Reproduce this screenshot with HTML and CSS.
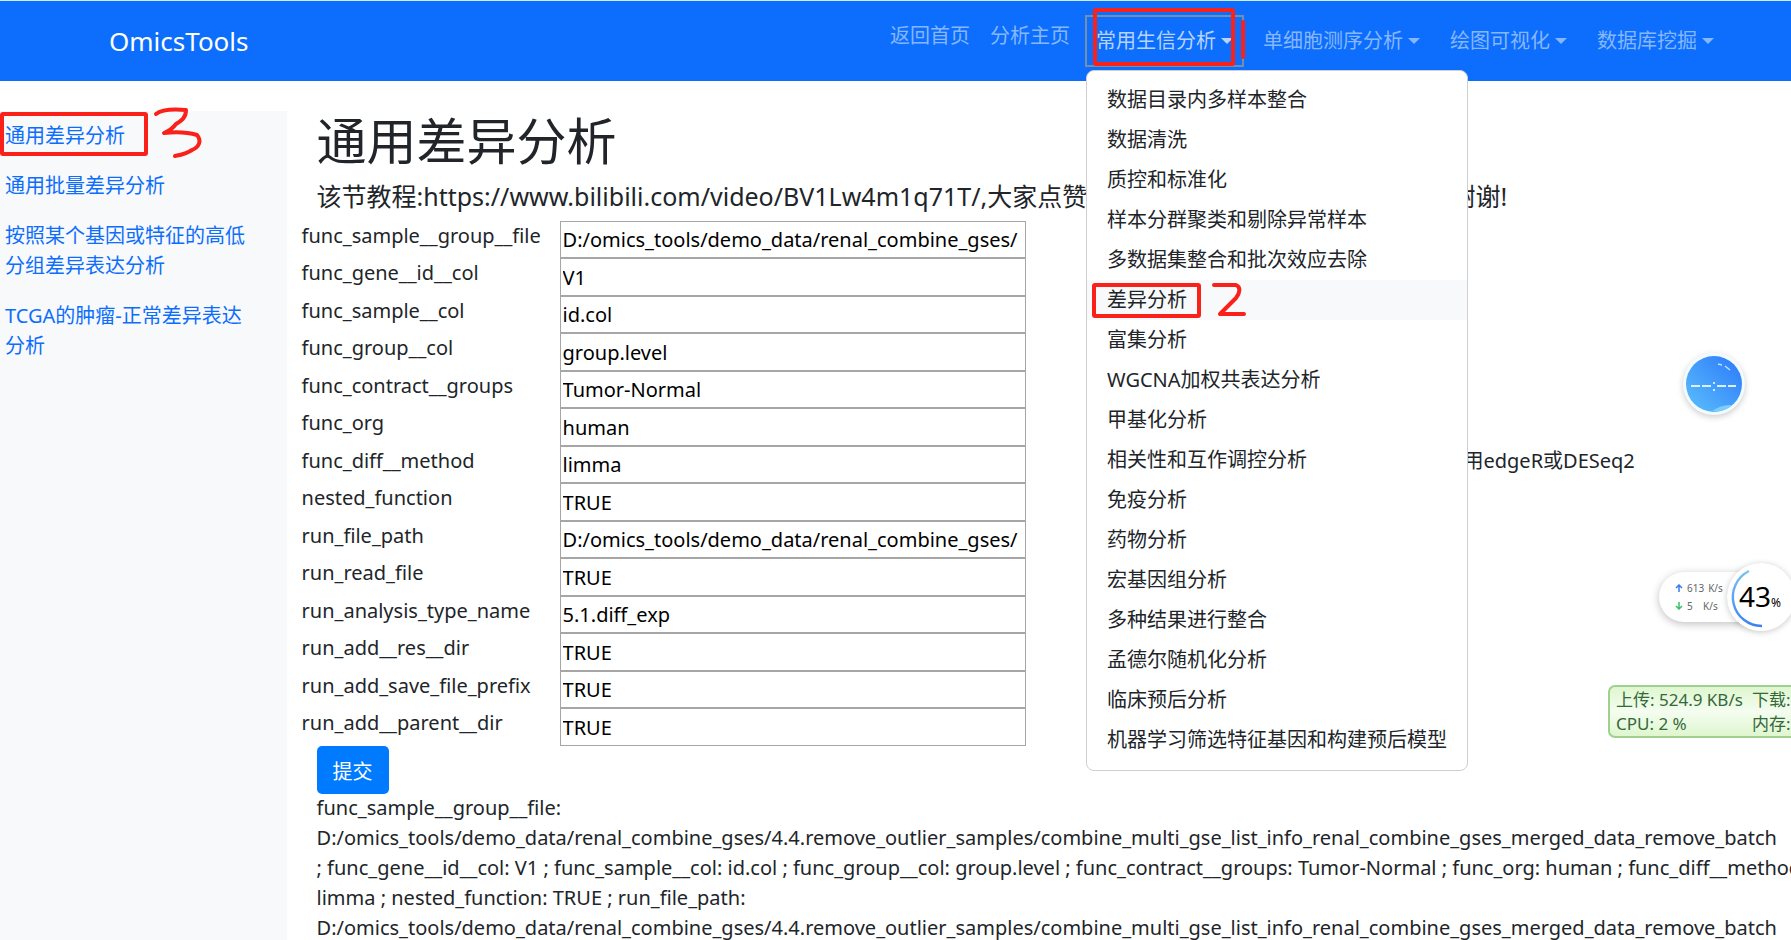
FILE: index.html
```html
<!DOCTYPE html>
<html lang="zh-CN">
<head>
  <meta charset="UTF-8" />
  <meta name="viewport" content="width=device-width, initial-scale=1.0" />
  <title>OmicsTools</title>
  <link rel="stylesheet" href="styles.css">
</head>
<body>
  <nav class="navbar">
    <a class="brand" href="#">OmicsTools</a>
    <ul class="nav-list">
      <li><a class="nav-link" href="#">返回首页</a></li>
      <li><a class="nav-link" href="#">分析主页</a></li>
      <li class="dropdown">
        <button type="button" class="nav-toggle active" aria-expanded="true">常用生信分析</button>
        <svg class="mark mark-nav" width="160" height="62" viewBox="0 0 160 62" aria-hidden="true">
          <rect x="3" y="3" width="138" height="54" rx="1" />
          <path d="M151 15V50" />
        </svg>
        <ul class="menu">
          <li><a href="#">数据目录内多样本整合</a></li>
          <li><a href="#">数据清洗</a></li>
          <li><a href="#">质控和标准化</a></li>
          <li><a href="#">样本分群聚类和剔除异常样本</a></li>
          <li><a href="#">多数据集整合和批次效应去除</a></li>
          <li class="current">
            <a href="#">差异分析</a>
            <svg class="mark mark-menu" width="160" height="40" viewBox="0 0 160 40" aria-hidden="true">
              <rect x="7" y="5" width="105" height="31" rx="1" />
              <path d="M127 5L149 5C154 7 153 13 149 18L133 34L157 34" />
            </svg>
          </li>
          <li><a href="#">富集分析</a></li>
          <li><a href="#">WGCNA加权共表达分析</a></li>
          <li><a href="#">甲基化分析</a></li>
          <li><a href="#">相关性和互作调控分析</a></li>
          <li><a href="#">免疫分析</a></li>
          <li><a href="#">药物分析</a></li>
          <li><a href="#">宏基因组分析</a></li>
          <li><a href="#">多种结果进行整合</a></li>
          <li><a href="#">孟德尔随机化分析</a></li>
          <li><a href="#">临床预后分析</a></li>
          <li><a href="#">机器学习筛选特征基因和构建预后模型</a></li>
        </ul>
      </li>
      <li class="dropdown"><button type="button" class="nav-toggle">单细胞测序分析</button></li>
      <li class="dropdown"><button type="button" class="nav-toggle">绘图可视化</button></li>
      <li class="dropdown"><button type="button" class="nav-toggle">数据库挖掘</button></li>
    </ul>
  </nav>

  <div class="page">
    <aside class="sidebar">
      <a href="#">通用差异分析</a>
      <a href="#">通用批量差异分析</a>
      <a href="#">按照某个基因或特征的高低分组差异表达分析</a>
      <a href="#">TCGA的肿瘤-正常差异表达分析</a>
      <svg class="mark mark-side" width="206" height="60" viewBox="0 0 206 60" aria-hidden="true">
        <rect x="2" y="10" width="144" height="40" rx="1" />
        <path d="M156 10C162 5 174 5 186 6C186 14 181 17 176 20C173 24 169 27 164 29C174 28 187 28 197 31C202 37 199 43 192 46C186 50 180 51 175 52" />
      </svg>
    </aside>

    <main class="content">
      <h1>通用差异分析</h1>
      <p class="lead">该节教程:https://www.bilibili.com/video/BV1Lw4m1q71T/,大家点赞投币收藏关注,支持一下我们频道,谢谢!</p>

      <form class="params">
        <label for="p1">func_sample__group__file</label>
        <input id="p1" type="text" value="D:/omics_tools/demo_data/renal_combine_gses/">
        <label for="p2">func_gene__id__col</label>
        <input id="p2" type="text" value="V1">
        <label for="p3">func_sample__col</label>
        <input id="p3" type="text" value="id.col">
        <label for="p4">func_group__col</label>
        <input id="p4" type="text" value="group.level">
        <label for="p5">func_contract__groups</label>
        <input id="p5" type="text" value="Tumor-Normal">
        <label for="p6">func_org</label>
        <input id="p6" type="text" value="human">
        <label for="p7">func_diff__method</label>
        <input id="p7" type="text" value="limma">
        <span class="hint">芯片数据使用limma,测序count数据推荐使用edgeR或DESeq2</span>
        <label for="p8">nested_function</label>
        <input id="p8" type="text" value="TRUE">
        <label for="p9">run_file_path</label>
        <input id="p9" type="text" value="D:/omics_tools/demo_data/renal_combine_gses/">
        <label for="p10">run_read_file</label>
        <input id="p10" type="text" value="TRUE">
        <label for="p11">run_analysis_type_name</label>
        <input id="p11" type="text" value="5.1.diff_exp">
        <label for="p12">run_add__res__dir</label>
        <input id="p12" type="text" value="TRUE">
        <label for="p13">run_add_save_file_prefix</label>
        <input id="p13" type="text" value="TRUE">
        <label for="p14">run_add__parent__dir</label>
        <input id="p14" type="text" value="TRUE">
        <button type="submit" class="submit">提交</button>
      </form>

      <div class="output">func_sample__group__file:<br>
        D:/omics_tools/demo_data/renal_combine_gses/4.4.remove_outlier_samples/combine_multi_gse_list_info_renal_combine_gses_merged_data_remove_batch<br>
        ; func_gene__id__col: V1 ; func_sample__col: id.col ; func_group__col: group.level ; func_contract__groups: Tumor-Normal ; func_org: human ; func_diff__method:<br>
        limma ; nested_function: TRUE ; run_file_path:<br>
        D:/omics_tools/demo_data/renal_combine_gses/4.4.remove_outlier_samples/combine_multi_gse_list_info_renal_combine_gses_merged_data_remove_batch</div>
    </main>
  </div>

  <!-- floating desktop widgets -->
  <div class="clock">
    <svg width="80" height="80" viewBox="0 0 80 80" aria-hidden="true">
      <defs>
        <linearGradient id="sky" x1="0" y1="1" x2="1" y2="0">
          <stop offset="0" stop-color="#5cc0fb" />
          <stop offset="1" stop-color="#2b78fa" />
        </linearGradient>
      </defs>
      <circle cx="40" cy="40" r="31" fill="#f2fbff" />
      <circle cx="40" cy="40" r="28" fill="url(#sky)" />
      <path d="M38 67Q48 60 58 61Q50 69 38 67Z" fill="#7ccdfc" />
      <path d="M44 20L48 21M51 22L56 26" stroke="#b9e2ff" stroke-width="1.5" fill="none" />
      <path d="M17 42H26M28 42H37M43 42H52M54 42H62" stroke="#d9f1ff" stroke-width="2" />
      <circle cx="40" cy="39" r="1" fill="#fff" />
      <circle cx="40" cy="46" r="1" fill="#fff" />
    </svg>
  </div>

  <div class="speed">
    <div class="rates">
      <div class="rate">
        <svg width="8" height="8" viewBox="0 0 8 8" aria-hidden="true"><path d="M4 8V1M1 4L4 1L7 4" stroke="#3b7cf0" stroke-width="1.5" fill="none" /></svg>
        <span>613</span><span>K/s</span>
      </div>
      <div class="rate">
        <svg width="8" height="8" viewBox="0 0 8 8" aria-hidden="true"><path d="M4 0V7M1 4L4 7L7 4" stroke="#3bbf6b" stroke-width="1.5" fill="none" /></svg>
        <span class="down">5</span><span>K/s</span>
      </div>
    </div>
    <div class="gauge">
      <svg class="arc" width="68" height="68" viewBox="0 0 68 68" aria-hidden="true">
        <defs>
          <linearGradient id="ring" x1="0" y1="0" x2="0" y2="1">
            <stop offset="0" stop-color="#79c3f8" />
            <stop offset="1" stop-color="#3b82f0" />
          </linearGradient>
        </defs>
        <path d="M22 8A29 29 0 0 0 35 63" stroke="url(#ring)" stroke-width="2.4" fill="none" />
      </svg>
      <span class="num">43</span><span class="pct">%</span>
    </div>
  </div>

  <div class="monitor">
    <span>上传: 524.9 KB/s</span><span>下载:</span>
    <span>CPU: 2 %</span><span>内存:</span>
  </div>
</body>
</html>
```
FILE: styles.css
```css
* {
  box-sizing: border-box;
}

body {
  position: relative;
  margin: 0;
  min-height: 100vh;
  display: flex;
  flex-direction: column;
  overflow: hidden;
  background-color: #fff;
  color: #212529;
  font-family: "Noto Sans", "Noto Sans CJK SC", sans-serif;
  font-size: 20px;
  line-height: 30px;
}

a {
  color: #0d6efd;
  text-decoration: none;
}

ul {
  list-style: none;
  margin: 0;
  padding: 0;
}

button,
input {
  font-family: inherit;
  font-size: inherit;
}

/* navbar */
.navbar {
  display: flex;
  justify-content: space-between;
  align-items: center;
  padding: 15px 67px 15px 109px;
  border-top: 1px solid #cdeefb;
  background-color: #0d6efd;
}

.brand {
  color: #fff;
  font-size: 26px;
}

.nav-list {
  display: flex;
  align-items: flex-start;
}

.nav-link {
  display: block;
  padding: 5px 10px;
  color: #86b7fe;
}

.dropdown {
  position: relative;
  margin-left: 6px;
}

.dropdown + .dropdown {
  margin-left: 10px;
}

.nav-toggle {
  display: flex;
  align-items: center;
  gap: 5px;
  height: 50px;
  padding: 0 10px;
  border: 0;
  background: none;
  color: #86b7fe;
  line-height: 30px;
}

.nav-toggle::after {
  content: "";
  border-top: 6px solid;
  border-left: 6px solid transparent;
  border-right: 6px solid transparent;
}

.nav-toggle.active {
  color: #b6d4fe;
  outline: 2px solid #748fab;
  outline-offset: -1px;
}

.menu {
  position: absolute;
  z-index: 10;
  top: 100%;
  left: 0;
  margin-top: 4px;
  padding: 9px 0 10px;
  border: 1px solid #cfcfcf;
  border-radius: 8px;
  background-color: #fff;
  white-space: nowrap;
}

.menu li {
  position: relative;
}

.menu a {
  display: block;
  padding: 5px 20px;
  color: #212529;
}

.menu .current {
  background-color: #f8f9fa;
}

/* hand drawn marks */
.mark {
  position: absolute;
  z-index: 11;
  fill: none;
  stroke: #f9211a;
  stroke-width: 4;
  stroke-linecap: round;
  stroke-linejoin: round;
  pointer-events: none;
}

.mark-nav {
  top: -9px;
  left: 6px;
}

.mark-menu {
  top: 0;
  left: 0;
}

.mark-side {
  top: -7px;
  left: 0;
}

/* layout */
.page {
  display: flex;
  flex: 1;
  margin-top: 30px;
}

.sidebar {
  position: relative;
  flex: none;
  width: 16%;
  padding: 10px 30px 10px 5px;
  background-color: #f8f9fa;
}

.sidebar a {
  display: block;
  margin-bottom: 20px;
}

.content {
  flex: 1;
  min-width: 0;
  padding: 0 15px 0 30px;
}

h1 {
  margin: 0 0 10px;
  font-size: 50px;
  font-weight: 400;
  line-height: 60px;
}

.lead {
  margin: 0 0 10px;
  font-size: 25px;
  white-space: nowrap;
}

/* parameter form */
.params {
  display: grid;
  grid-template-columns: 258px 466px 1fr;
  grid-auto-rows: 37px 38px;
  margin-left: -15px;
}

.params label {
  grid-column: 1;
}

.params input {
  grid-column: 2;
  min-width: 0;
  padding: 1px 2px;
  border: 1px solid #a6a6a6;
  background-color: #fff;
  color: #000;
}

.hint {
  grid-column: 3;
  padding-left: 60px;
  white-space: nowrap;
}

.submit {
  grid-column: 1;
  justify-self: start;
  height: 48px;
  margin-left: 15px;
  padding: 0 16px;
  border: 0;
  border-radius: 5px;
  background-color: #007bff;
  color: #fff;
}

.output {
  margin-top: 10px;
  white-space: nowrap;
}

/* floating widgets */
.clock {
  position: absolute;
  top: 344px;
  right: 37px;
  height: 80px;
  filter: drop-shadow(0 2px 3px rgba(0, 0, 0, 0.2));
}

.speed {
  position: absolute;
  top: 563px;
  right: -4px;
  display: flex;
  align-items: center;
}

.rates {
  width: 100px;
  height: 50px;
  margin-right: -32px;
  padding: 7px 0 0 16px;
  border-radius: 25px 0 0 25px;
  background-color: #fff;
  box-shadow: 0 2px 8px rgba(0, 0, 0, 0.25);
  color: #666;
  font-size: 10px;
  line-height: 18px;
}

.rate {
  display: flex;
  align-items: center;
  gap: 4px;
}

.down {
  width: 12px;
}

.gauge {
  position: relative;
  display: flex;
  align-items: baseline;
  width: 68px;
  height: 68px;
  padding: 18px 0 0 12px;
  border-radius: 50%;
  background-color: #fff;
  box-shadow: 0 1px 6px rgba(0, 0, 0, 0.22);
  color: #000;
}

.arc {
  position: absolute;
  top: 0;
  left: 0;
}

.num {
  font-size: 28px;
}

.pct {
  font-size: 12px;
}

.monitor {
  position: absolute;
  top: 685px;
  right: -10px;
  display: grid;
  grid-template-columns: 136px 47px;
  padding: 1px 0 0 6px;
  border: 2px solid #9fd08f;
  border-radius: 7px;
  background: linear-gradient(#dff6cf, #f4fdf0 50%, #dff6cf);
  color: #34693a;
  font-size: 17px;
  line-height: 24px;
  white-space: nowrap;
}
```
